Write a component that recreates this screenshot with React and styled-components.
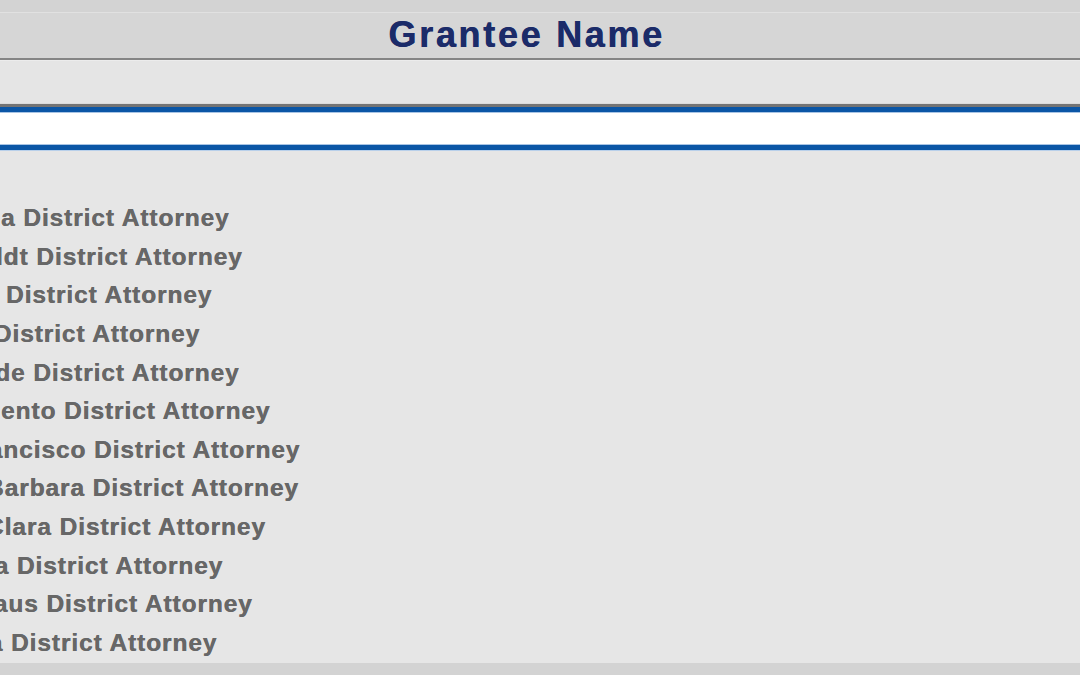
import React from 'react';
import styled, { createGlobalStyle } from 'styled-components';

const GlobalStyle = createGlobalStyle`
  html, body {
    margin: 0;
    padding: 0;
    background: #e6e6e6;
    font-family: 'Liberation Sans', Arial, sans-serif;
  }
`;

const Page = styled.div`
  width: 1080px;
  height: 675px;
  display: flex;
  flex-direction: column;
  overflow: hidden;
  background: #e6e6e6;
`;

const TopStrip = styled.div`
  height: 12px;
  flex: none;
  background: #d3d3d3;
  border-bottom: 1px solid #e1e1e1;
`;

const HeaderBar = styled.div`
  height: 47px;
  flex: none;
  display: flex;
  align-items: center;
  justify-content: center;
  padding-right: 27px;
  padding-bottom: 1px;
  box-sizing: border-box;
  background: #d6d6d6;
  border-bottom: 2px solid #858585;
`;

const Title = styled.h1`
  margin: 0;
  font-size: 36px;
  line-height: 40px;
  font-weight: 700;
  letter-spacing: 2.7px;
  color: #1b2b69;
  text-shadow: 0.5px 0 0 #1b2b69;
`;

const FilterBar = styled.div`
  height: 44px;
  flex: none;
  background: #e5e5e5;
  box-shadow: inset 0 1px 0 #ececec, inset 0 -1px 0 #dcdcdc;
  border-bottom: 3px solid #747474;
`;

const SearchInput = styled.input`
  display: block;
  flex: none;
  width: 100%;
  height: 43px;
  margin: 0 0 1px;
  padding: 0 12px;
  box-sizing: border-box;
  border: none;
  border-top: 5px solid #0b56a6;
  border-bottom: 5px solid #0b56a6;
  background: #ffffff;
  box-shadow: inset 0 1px 0 #a8c4e4, inset 0 -1px 0 #a8c4e4, 0 1px 0 #b9d0ea;
  outline: none;
  font: inherit;
`;

const List = styled.ul`
  list-style: none;
  margin: 0 0 0 -93px;
  padding: 48px 0 0;
  flex: none;
`;

const Item = styled.li`
  height: 38.65px;
  font-size: 24.5px;
  line-height: 38.65px;
  font-weight: 700;
  letter-spacing: 0.9px;
  color: #676767;
  text-shadow: 0.4px 0 0 #676767;
  white-space: nowrap;
`;

const BottomBand = styled.div`
  flex: 1;
  background: #d3d3d3;
`;

const counties = [
  'Alameda',
  'Humboldt',
  'Merced',
  'Placer',
  'Riverside',
  'Sacramento',
  'San Francisco',
  'Santa Barbara',
  'Santa Clara',
  'Sonoma',
  'Stanislaus',
  'Ventura',
];

const App = () => (
  <Page>
    <GlobalStyle />
    <TopStrip />
    <HeaderBar>
      <Title>Grantee Name</Title>
    </HeaderBar>
    <FilterBar />
    <SearchInput type='text' aria-label='Search grantees' />
    <List>
      {counties.map((name) => (
        <Item key={name}>{name} District Attorney</Item>
      ))}
    </List>
    <BottomBand />
  </Page>
);

export default App;
